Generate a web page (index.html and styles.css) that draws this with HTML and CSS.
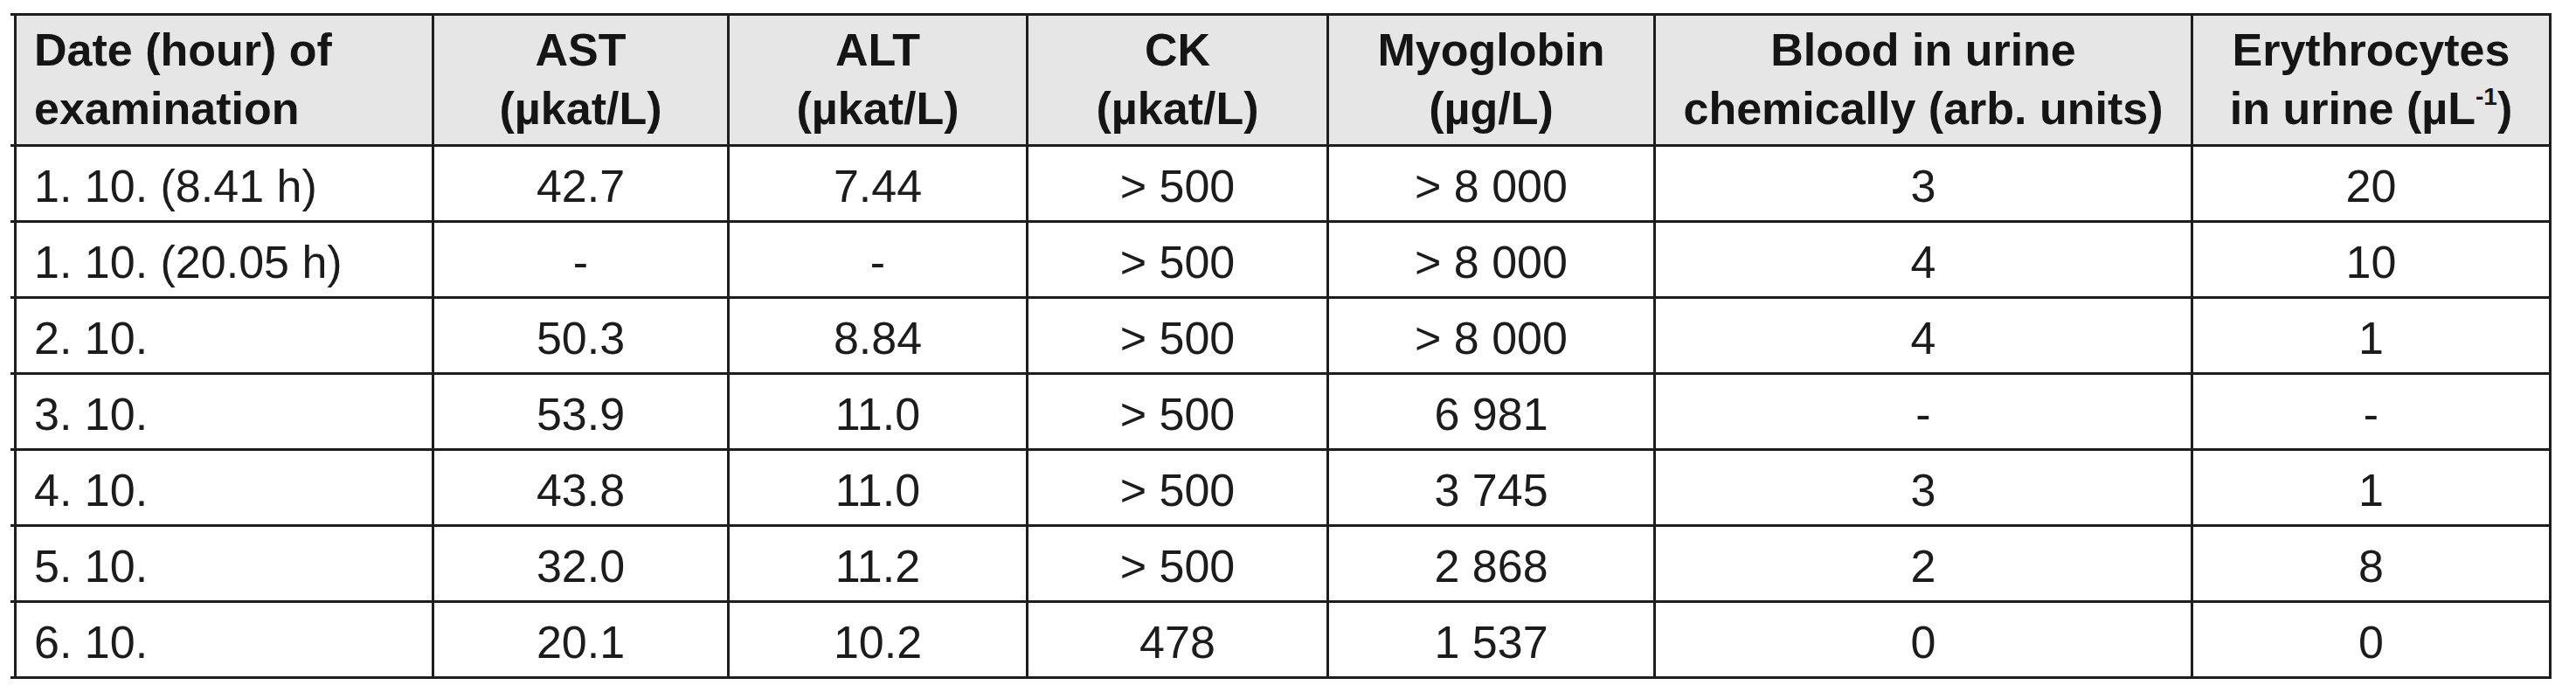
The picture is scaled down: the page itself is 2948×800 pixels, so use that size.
FILE: index.html
```html
<!DOCTYPE html>
<html>
<head>
<meta charset="utf-8">
<link rel="stylesheet" href="styles.css">
</head>
<body>
<table class="lab">
  <thead>
    <tr>
      <th class="c1 left">Date (hour) of<br>examination</th>
      <th class="c2">AST<br>(µkat/L)</th>
      <th class="c3">ALT<br>(µkat/L)</th>
      <th class="c4">CK<br>(µkat/L)</th>
      <th class="c5">Myoglobin<br>(µg/L)</th>
      <th class="c6">Blood in urine<br>chemically (arb. units)</th>
      <th class="c7">Erythrocytes<br>in urine (µL<sup>-1</sup>)</th>
    </tr>
  </thead>
  <tbody>
    <tr><td class="left">1. 10. (8.41 h)</td><td>42.7</td><td>7.44</td><td>&gt; 500</td><td>&gt; 8 000</td><td>3</td><td>20</td></tr>
    <tr><td class="left">1. 10. (20.05 h)</td><td>-</td><td>-</td><td>&gt; 500</td><td>&gt; 8 000</td><td>4</td><td>10</td></tr>
    <tr><td class="left">2. 10.</td><td>50.3</td><td>8.84</td><td>&gt; 500</td><td>&gt; 8 000</td><td>4</td><td>1</td></tr>
    <tr><td class="left">3. 10.</td><td>53.9</td><td>11.0</td><td>&gt; 500</td><td>6 981</td><td>-</td><td>-</td></tr>
    <tr><td class="left">4. 10.</td><td>43.8</td><td>11.0</td><td>&gt; 500</td><td>3 745</td><td>3</td><td>1</td></tr>
    <tr><td class="left">5. 10.</td><td>32.0</td><td>11.2</td><td>&gt; 500</td><td>2 868</td><td>2</td><td>8</td></tr>
    <tr><td class="left">6. 10.</td><td>20.1</td><td>10.2</td><td>478</td><td>1 537</td><td>0</td><td>0</td></tr>
  </tbody>
</table>
</body>
</html>
```
FILE: styles.css
```css
html, body {
  margin: 0;
  padding: 0;
  background: #ffffff;
}

body {
  padding: 15px 0 0 16px;
  font-family: "Liberation Sans", Arial, sans-serif;
  color: #1c1c1c;
}

.lab {
  border-collapse: separate;
  border-spacing: 0;
  table-layout: fixed;
  width: 2904px;
  border-top: 3px solid #1e1e1e;
  border-left: 3px solid #1e1e1e;
  font-size: 52px;
}

.lab th,
.lab td {
  box-sizing: border-box;
  border-right: 3px solid #1e1e1e;
  border-bottom: 3px solid #1e1e1e;
  text-align: center;
  vertical-align: middle;
  padding: 0;
}

.lab th {
  background: #e6e6e6;
  font-weight: bold;
  line-height: 67px;
  padding: 6px 4px 7px;
  color: #151515;
}

.lab td {
  font-weight: normal;
  line-height: 60px;
  padding: 15px 0 9px;
  height: 86.7px;
}

.lab .left {
  text-align: left;
  padding-left: 20px;
  position: relative;
}

/* horizontal rules run a few pixels past the left frame */
.lab .left::after {
  content: "";
  position: absolute;
  left: -7px;
  bottom: -3px;
  width: 4px;
  height: 3px;
  background: #1e1e1e;
}

.lab th.left::before {
  content: "";
  position: absolute;
  left: -7px;
  top: -3px;
  width: 4px;
  height: 3px;
  background: #1e1e1e;
}

.lab sup {
  font-size: 28px;
  line-height: 0;
  vertical-align: 22px;
  font-weight: bold;
}

.c1 { width: 478px; }
.c2 { width: 338px; }
.c3 { width: 342px; }
.c4 { width: 344px; }
.c5 { width: 374px; }
.c6 { width: 615px; }
.c7 { width: 410px; }
```
